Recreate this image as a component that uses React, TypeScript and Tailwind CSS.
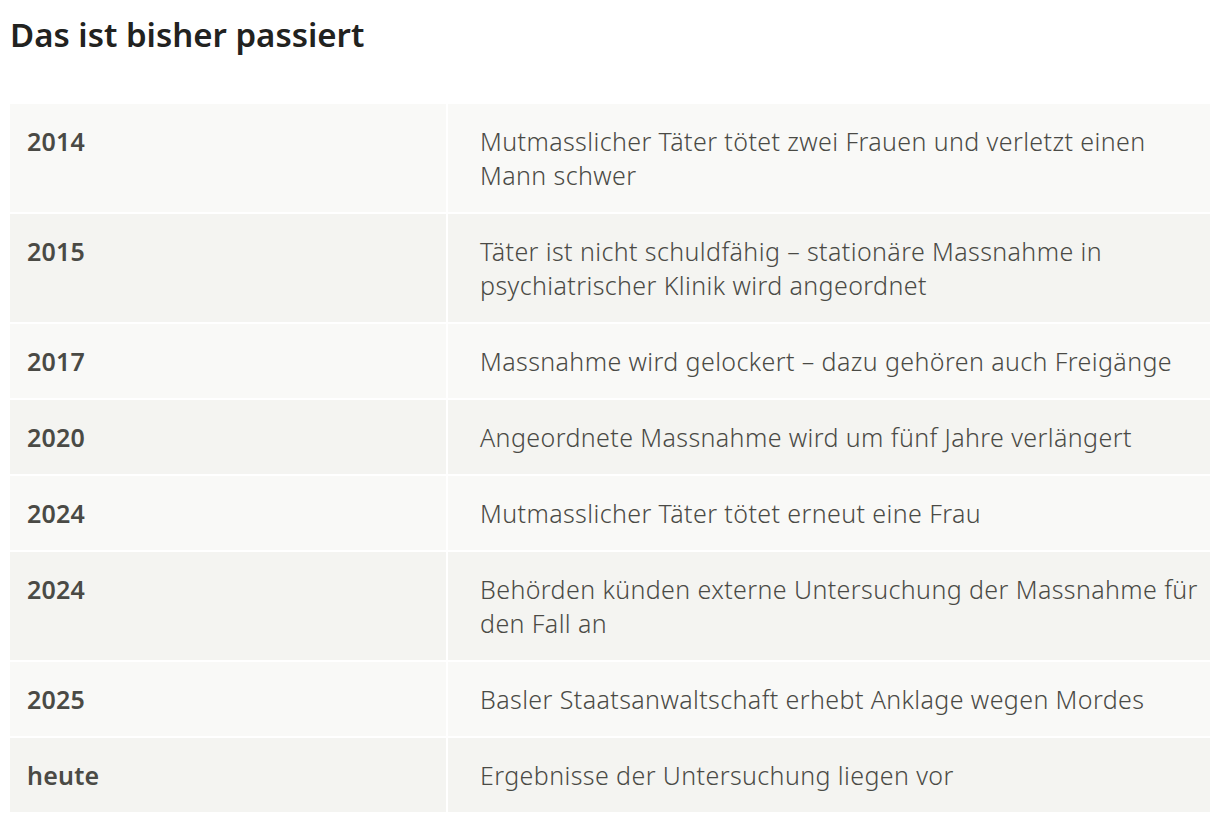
import React from "react";

const rows: [string, string][] = [
  ["2014", "Mutmasslicher Täter tötet zwei Frauen und verletzt einen Mann schwer"],
  ["2015", "Täter ist nicht schuldfähig – stationäre Massnahme in psychiatrischer Klinik wird angeordnet"],
  ["2017", "Massnahme wird gelockert – dazu gehören auch Freigänge"],
  ["2020", "Angeordnete Massnahme wird um fünf Jahre verlängert"],
  ["2024", "Mutmasslicher Täter tötet erneut eine Frau"],
  ["2024", "Behörden künden externe Untersuchung der Massnahme für den Fall an"],
  ["2025", "Basler Staatsanwaltschaft erhebt Anklage wegen Mordes"],
  ["heute", "Ergebnisse der Untersuchung liegen vor"],
];

export default function App() {
  return (
    <div className="min-h-[822px] bg-white px-[10px] pt-[13px] font-['Noto_Sans',sans-serif]">
      <h2 className="text-[33px] font-semibold leading-[44px] text-[#222220]">Das ist bisher passiert</h2>
      <div className="mt-[47px] grid grid-cols-[436px_1fr] gap-[2px]">
        {rows.map(([year, text], i) => (
          <React.Fragment key={i}>
            <div
              className={`py-5 pl-[17px] pr-4 text-[25px] font-semibold leading-[34px] tracking-[0.2px] text-[#4a4a45] ${
                i % 2 === 0 ? "bg-[#f9f9f7]" : "bg-[#f4f4f1]"
              }`}
            >
              {year}
            </div>
            <div
              className={`py-5 pl-[32px] pr-[6px] text-[25px] font-light leading-[34px] tracking-[0.4px] text-[#4a4a45] ${
                i % 2 === 0 ? "bg-[#f9f9f7]" : "bg-[#f4f4f1]"
              }`}
            >
              {text}
            </div>
          </React.Fragment>
        ))}
      </div>
    </div>
  );
}
